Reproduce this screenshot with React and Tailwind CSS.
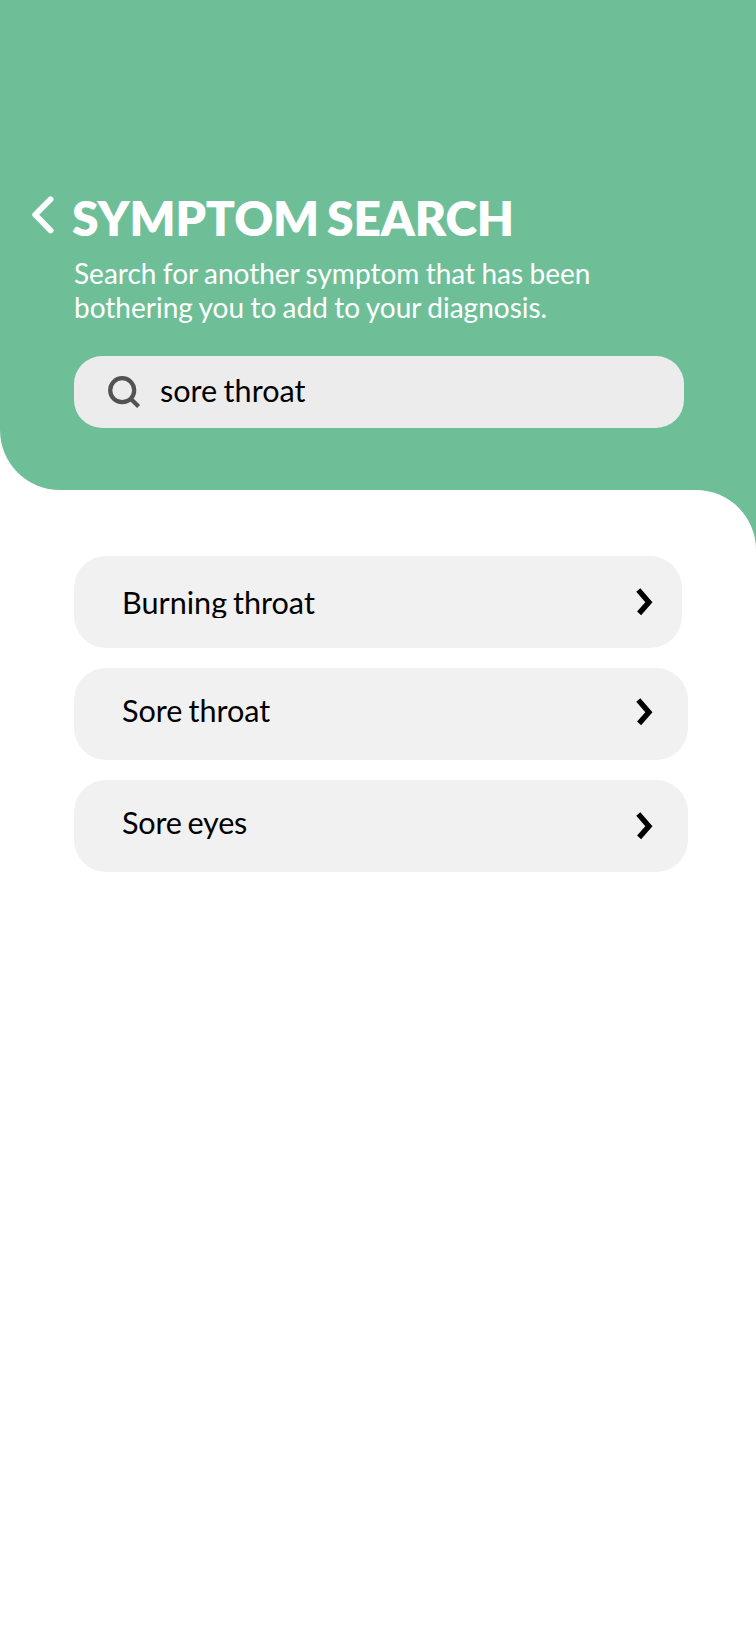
const results = [
  { label: "Burning throat", row: "w-[608px]", text: "mt-[29px] h-[33px]", icon: "mt-[32px] mr-[28px]" },
  { label: "Sore throat", row: "w-[614px]", text: "mt-[25px] h-[36px]", icon: "mt-[30px] mr-[34px]" },
  { label: "Sore eyes", row: "w-[614px]", text: "mt-[25px] h-[40px] tracking-[-0.2px]", icon: "mt-[32px] mr-[34px]" },
];

function BackIcon() {
  return (
    <svg className="block h-[40px] w-[24px]" viewBox="0 0 24 40" fill="none" stroke="#fff" strokeWidth="5.8" strokeLinecap="round" strokeLinejoin="round">
      <path d="M18.6 4.3 3.2 19.8 18.6 35.5" />
    </svg>
  );
}

function SearchIcon() {
  return (
    <svg className="block h-[34px] w-[34px]" viewBox="0 0 34 34" fill="none" stroke="#525252" strokeWidth="4.2">
      <circle cx="15.2" cy="15.2" r="12" />
      <path d="M23.2 23.2 31.6 31.6" />
    </svg>
  );
}

function ChevronIcon() {
  return (
    <svg className="block h-[28px] w-[18px]" viewBox="0 0 18 28" fill="none" stroke="#000" strokeWidth="5.4">
      <path d="M2.3 2 12.9 14.3 3.1 25.4" />
    </svg>
  );
}

export default function App() {
  return (
    <div className="min-h-[1636px] w-[756px] overflow-hidden bg-white font-['Lato',sans-serif] text-black">
      <header className="h-[490px] rounded-bl-[60px] bg-[#6ebf98] pt-[189px]">
        <div className="flex items-start">
          <button className="mt-[6px] ml-[32px] w-[24px]" aria-label="Back">
            <BackIcon />
          </button>
          <h1 className="ml-[16px] text-[48px] leading-[58px] font-extrabold tracking-[-0.15px] whitespace-nowrap text-white [word-spacing:-3px]">SYMPTOM SEARCH</h1>
        </div>
        <p className="mt-[9px] ml-[74px] text-[28px] leading-[34px] whitespace-nowrap text-white [word-spacing:-0.8px]">
          Search for another symptom that has been
          <br />
          bothering you to add to your diagnosis.
        </p>
        <div className="mt-[32px] ml-[74px] flex h-[72.4px] w-[610.4px] items-start rounded-[28px] bg-[#ececec]">
          <div className="mt-[19px] ml-[33px]">
            <SearchIcon />
          </div>
          <span className="mt-[17px] ml-[19px] text-[30.6px] leading-[36px] [word-spacing:-1.5px]">sore throat</span>
        </div>
      </header>
      <div className="bg-[linear-gradient(#6ebf98_60px,#fff_60px)]">
        <main className="min-h-[1146px] rounded-tr-[60px] bg-white pt-[66px] pl-[74px]">
          <ul className="flex flex-col gap-5">
            {results.map((r) => (
              <li key={r.label} className={`flex h-[92px] items-start justify-between rounded-[32px] bg-[#f1f1f1] pl-[48px] ${r.row}`}>
                <span className={`overflow-hidden text-[30.6px] leading-[36px] [word-spacing:-1.9px] ${r.text}`}>{r.label}</span>
                <span className={r.icon}>
                  <ChevronIcon />
                </span>
              </li>
            ))}
          </ul>
        </main>
      </div>
    </div>
  );
}
